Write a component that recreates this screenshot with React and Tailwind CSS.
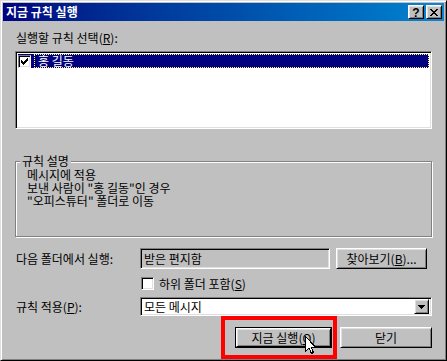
import React from 'react';

const font = { fontFamily: '"Noto Sans CJK KR", "Noto Sans", sans-serif' };

// 움푹 들어간 입력칸 테두리
const sunken =
  'border border-t-[#808080] border-l-[#808080] border-b-white border-r-white shadow-[inset_1px_1px_0_#000,inset_-1px_-1px_0_#dfdfdf]';

// 튀어나온 버튼 테두리
const raised =
  'border border-t-white border-l-white border-b-black border-r-black shadow-[inset_1px_1px_0_#dfdfdf,inset_-1px_-1px_0_#808080] bg-[#c0c0c0]';

function TitleButton({ children }) {
  return (
    <div className={`w-[16px] h-[14px] flex items-center justify-center ${raised}`}>{children}</div>
  );
}

function Button({ children, className = '', isDefault = false }) {
  if (isDefault) {
    return (
      <div className={`border border-black ${className}`}>
        <div className={`h-full flex items-center justify-center ${raised}`}>{children}</div>
      </div>
    );
  }
  return <div className={`flex items-center justify-center ${raised} ${className}`}>{children}</div>;
}

function CheckMark() {
  return (
    <svg width="7" height="7" viewBox="0 0 7 7" shapeRendering="crispEdges">
      <path d="M6 0h1v3h-1zM5 1h1v3h-1zM4 2h1v3h-1zM3 3h1v3h-1zM2 4h1v3h-1zM1 3h1v3h-1zM0 2h1v3h-1z" fill="#000" />
    </svg>
  );
}

export default function App() {
  return (
    <div
      className="relative w-[447px] h-[361px] overflow-hidden bg-[#c0c0c0] text-[12px] leading-[14px] text-black"
      style={font}
    >
      {/* 창 테두리 */}
      <div className="w-full h-full border border-t-[#dfdfdf] border-l-[#dfdfdf] border-r-black border-b-black shadow-[inset_1px_1px_0_#fff,inset_-1px_-1px_0_#808080] p-[2px] flex flex-col">
        {/* 제목 표시줄 */}
        <div className="h-[18px] flex items-center justify-between bg-linear-to-r from-[#000080] to-[#1084d0] pl-[3px] pr-[2px]">
          <span className="text-white font-bold text-[12px]">지금 규칙 실행</span>
          <div className="flex gap-[2px]">
            <TitleButton>
              <span className="font-bold text-[12px] leading-none mt-[1px]" style={{ fontFamily: '"Liberation Sans", sans-serif' }}>?</span>
            </TitleButton>
            <TitleButton>
              <svg width="8" height="7" viewBox="0 0 8 7" shapeRendering="crispEdges">
                <path d="M0 0h2v1h-2zM6 0h2v1h-2zM1 1h2v1h-2zM5 1h2v1h-2zM2 2h4v1h-4zM3 3h2v1h-2zM2 4h4v1h-4zM1 5h2v1h-2zM5 5h2v1h-2zM0 6h2v1h-2zM6 6h2v1h-2z" fill="#000" />
              </svg>
            </TitleButton>
          </div>
        </div>

        <div className="flex flex-col px-[12px]">
          {/* 규칙 목록 */}
          <div className="mt-[10px] pl-[1px]">
            실행할 규칙 선택(<u>R</u>):
          </div>
          <div className={`mt-[6px] h-[78px] bg-white p-[2px] ${sunken}`}>
            <div className="h-[14px] bg-[#000080] flex items-center pl-[0px]">
              <div className={`w-[13px] h-[13px] bg-white flex items-center justify-center ${sunken}`}>
                <CheckMark />
              </div>
              <div className="ml-[3px] flex-1 h-full border border-dotted border-[#ffff80] text-white flex items-center pl-[3px]">
                홍 길동
              </div>
            </div>
          </div>

          {/* 규칙 설명 */}
          <div className="relative mt-[32px] h-[76px] border border-[#808080] shadow-[inset_1px_1px_0_#fff,1px_1px_0_#fff] pt-[6px] pl-[11px] leading-[13px]">
            <span className="absolute -top-[8px] left-[4px] px-[2px] bg-[#c0c0c0] leading-[14px]">규칙 설명</span>
            <div>메시지에 적용</div>
            <div>보낸 사람이 "홍 길동"인 경우</div>
            <div>"오피스튜터" 폴더로 이동</div>
          </div>

          {/* 폴더 */}
          <div className="mt-[11px] h-[21px] flex items-center">
            <div className="w-[125px] pl-[1px]">다음 폴더에서 실행:</div>
            <div className={`w-[190px] h-[21px] flex items-center pl-[3px] ${sunken}`}>받은 편지함</div>
            <Button className="ml-[6px] w-[91px] h-[21px]">
              찾아보기(<u>B</u>)...
            </Button>
          </div>

          <div className="mt-[8px] h-[13px] flex items-center pl-[126px]">
            <div className={`w-[13px] h-[13px] bg-white ${sunken}`} />
            <span className="ml-[5px]">
              하위 폴더 포함(<u>S</u>)
            </span>
          </div>

          <div className="mt-[7px] h-[19px] flex items-center">
            <div className="w-[125px] pl-[1px]">
              규칙 적용(<u>P</u>):
            </div>
            <div className={`flex-1 h-[19px] bg-white flex items-center p-[2px] ${sunken}`}>
              <span className="flex-1 pl-[1px]">모든 메시지</span>
              <div className={`w-[15px] h-[15px] flex items-center justify-center ${raised}`}>
                <svg width="7" height="4" viewBox="0 0 7 4" shapeRendering="crispEdges">
                  <path d="M0 0h7v1h-7zM1 1h5v1h-5zM2 2h3v1h-3zM3 3h1v1h-1z" fill="#000" />
                </svg>
              </div>
            </div>
          </div>

          {/* 하단 버튼 */}
          <div className="mt-[11px] flex justify-end gap-[8px]">
            <Button isDefault className="w-[97px] h-[21px]">
              지금 실행(<u>Q</u>)
            </Button>
            <Button className="w-[92px] h-[21px]">닫기</Button>
          </div>
        </div>
      </div>

      {/* 강조 표시 */}
      <div className="absolute left-[221px] top-[316px] w-[116px] h-[43px] border-[4px] border-[#f00]" />

      {/* 마우스 포인터 */}
      <svg className="absolute left-[305px] top-[336px]" width="12" height="19" viewBox="0 0 12 19" shapeRendering="crispEdges">
        <path d="M0.5 0.5 L0.5 15.5 L4 12 L6.5 17.5 L8.5 16.5 L6 11 L10.5 11 Z" fill="#fff" stroke="#000" strokeWidth="1" />
      </svg>
    </div>
  );
}
